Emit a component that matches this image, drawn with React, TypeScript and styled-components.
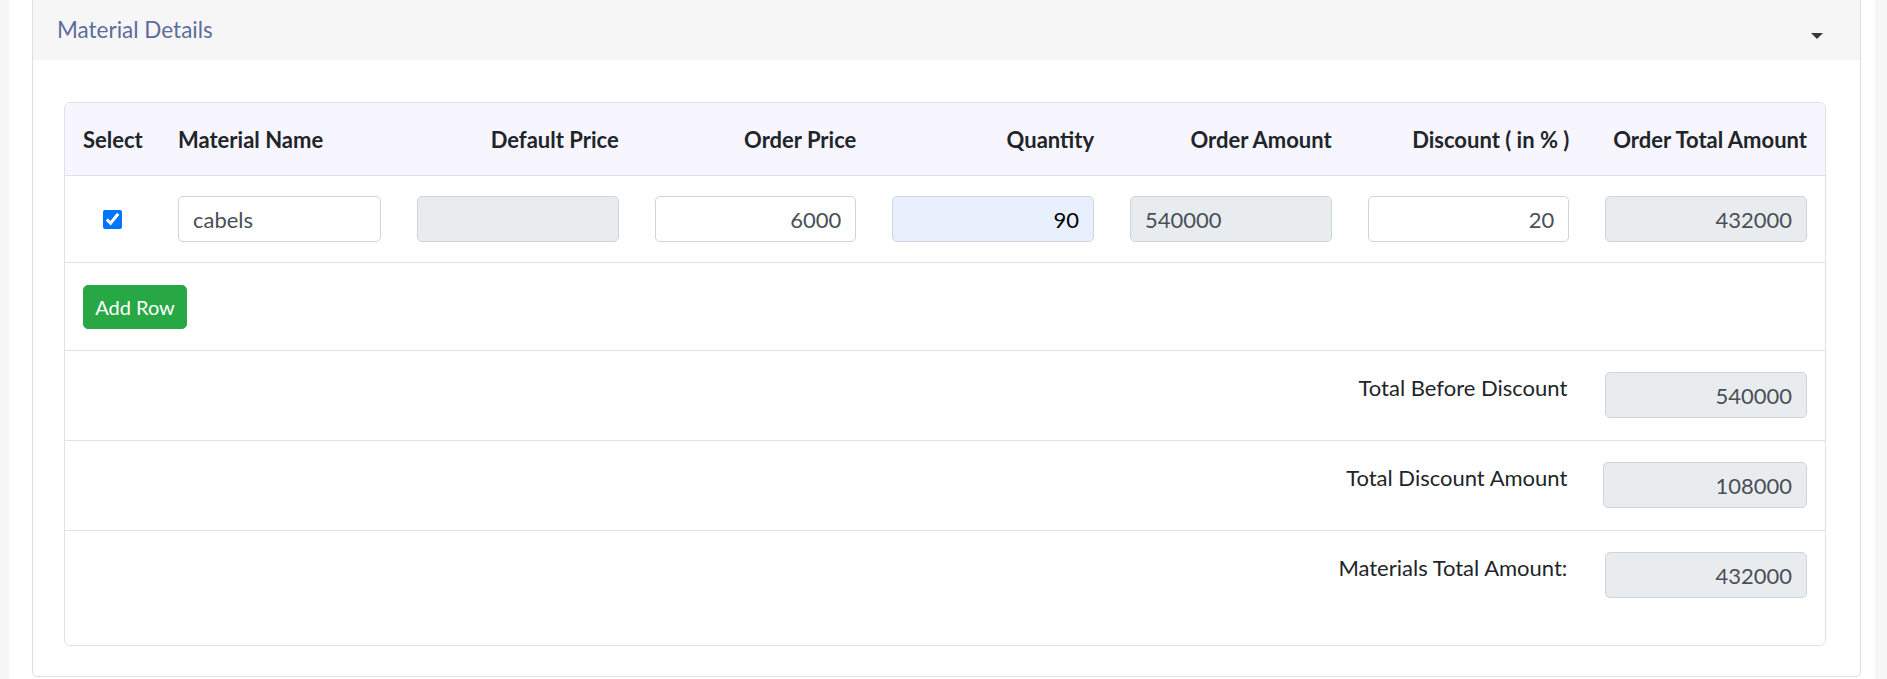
import React from "react";
import styled, { createGlobalStyle, css } from "styled-components";

const GlobalStyle = createGlobalStyle`
  html, body {
    margin: 0;
    padding: 0;
    background: #f7f7f7;
    font-family: Lato, "Open Sans", sans-serif;
    color: #212529;
  }
  * { box-sizing: border-box; }
`;

const Page = styled.div`
  display: flex;
  min-height: 679px;
  padding: 0 12px 0 9px;
`;

const Panel = styled.main`
  flex: 1;
  background: #ffffff;
  padding: 0 14px 2px 23px;
`;

const Card = styled.section`
  border: 1px solid #dfdfdf;
  border-top: 0;
  border-radius: 0 0 5px 5px;
  background: #ffffff;
`;

const CardHeader = styled.header`
  display: flex;
  align-items: center;
  justify-content: space-between;
  height: 60px;
  padding: 0 37px 0 24px;
  background: #f6f6f6;
`;

const CardTitle = styled.h3`
  margin: 0 0 2px;
  font-size: 22.5px;
  font-weight: 400;
  color: #5d6c9d;
`;

const Caret = styled.svg`
  width: 12px;
  height: 6px;
  margin-top: 11px;
  fill: #343a40;
`;

const CardBody = styled.div`
  padding: 42px 34px 30px 31px;
`;

const TableBox = styled.div`
  border: 1px solid #dee2e6;
  border-radius: 6px;
  overflow: hidden;
`;

const gridCols = css`
  display: grid;
  grid-template-columns: 95px 239px repeat(6, 1fr);
`;

const HeadRow = styled.div`
  ${gridCols};
  height: 73px;
  align-items: center;
  background: #f7f6fe;
  border-bottom: 1px solid #dee2e6;
`;

const HeadCell = styled.div<{ $align?: "left" | "right" }>`
  padding: 0 18px;
  font-size: 22px;
  font-weight: 700;
  text-align: ${(p) => p.$align ?? "right"};
  white-space: nowrap;
  color: #212529;
`;

const BodyRow = styled.div`
  ${gridCols};
  height: 87px;
  align-items: center;
  border-bottom: 1px solid #dee2e6;
`;

const Cell = styled.div<{ $center?: boolean }>`
  padding: 0 18px;
  display: flex;
  justify-content: ${(p) => (p.$center ? "center" : "stretch")};
`;

const ActionRow = styled.div`
  display: flex;
  align-items: center;
  height: 88px;
  padding: 0 18px;
  border-bottom: 1px solid #dee2e6;
`;

const SummaryRow = styled.div<{ $last?: boolean }>`
  ${gridCols};
  align-items: start;
  padding: 21px 0 ${(p) => (p.$last ? "47px" : "22px")};
  border-bottom: ${(p) => (p.$last ? "0" : "1px solid #dee2e6")};
`;

const SummaryLabel = styled.label`
  grid-column: 1 / 8;
  padding: 1px 20px 0 18px;
  font-size: 22px;
  line-height: 29px;
  text-align: right;
  color: #212529;
`;

const Check = styled.input`
  width: 19px;
  height: 19px;
  margin: 0;
  accent-color: #0075ff;
`;

const Field = styled.input<{
  $variant?: "plain" | "readonly" | "filled";
  $align?: "left" | "right";
  $extend?: number;
}>`
  width: calc(100% + ${(p) => p.$extend ?? 0}px);
  margin-left: ${(p) => -(p.$extend ?? 0)}px;
  height: 46px;
  padding: 0 14px;
  border: 1px solid #ced4da;
  border-radius: 5px;
  font-family: Lato, "Open Sans", sans-serif;
  font-size: 22px;
  outline: none;
  text-align: ${(p) => p.$align ?? "right"};
  color: ${(p) => (p.$variant === "filled" ? "#000000" : "#495057")};
  background: ${(p) =>
    p.$variant === "readonly"
      ? "#e9ecef"
      : p.$variant === "filled"
      ? "#e8f0fe"
      : "#ffffff"};
`;

const AddButton = styled.button`
  width: 104px;
  height: 44px;
  padding: 0;
  border: 1px solid #28a745;
  border-radius: 5px;
  background: #28a745;
  color: #ffffff;
  font-family: Lato, "Open Sans", sans-serif;
  font-size: 20px;
  cursor: pointer;
`;

const headers: { label: string; align?: "left" | "right" }[] = [
  { label: "Select", align: "left" },
  { label: "Material Name", align: "left" },
  { label: "Default Price" },
  { label: "Order Price" },
  { label: "Quantity" },
  { label: "Order Amount" },
  { label: "Discount ( in % )" },
  { label: "Order Total Amount" },
];

const totals = [
  { label: "Total Before Discount", value: "540000", extend: 0 },
  { label: "Total Discount Amount", value: "108000", extend: 2 },
  { label: "Materials Total Amount:", value: "432000", extend: 0 },
];

export default function App() {
  return (
    <>
      <GlobalStyle />
      <Page>
        <Panel>
          <Card>
            <CardHeader>
              <CardTitle>Material Details</CardTitle>
              <Caret viewBox="0 0 12 6">
                <path d="M0 0h12L6 6z" />
              </Caret>
            </CardHeader>
            <CardBody>
              <TableBox>
                <HeadRow>
                  {headers.map((h) => (
                    <HeadCell key={h.label} $align={h.align}>
                      {h.label}
                    </HeadCell>
                  ))}
                </HeadRow>
                <BodyRow>
                  <Cell $center>
                    <Check type="checkbox" defaultChecked />
                  </Cell>
                  <Cell>
                    <Field $align="left" defaultValue="cabels" />
                  </Cell>
                  <Cell>
                    <Field $variant="readonly" readOnly defaultValue="" />
                  </Cell>
                  <Cell>
                    <Field defaultValue="6000" />
                  </Cell>
                  <Cell>
                    <Field $variant="filled" defaultValue="90" />
                  </Cell>
                  <Cell>
                    <Field
                      $variant="readonly"
                      $align="left"
                      readOnly
                      defaultValue="540000"
                    />
                  </Cell>
                  <Cell>
                    <Field defaultValue="20" />
                  </Cell>
                  <Cell>
                    <Field $variant="readonly" readOnly defaultValue="432000" />
                  </Cell>
                </BodyRow>
                <ActionRow>
                  <AddButton type="button">Add Row</AddButton>
                </ActionRow>
                {totals.map((t, i) => (
                  <SummaryRow key={t.label} $last={i === totals.length - 1}>
                    <SummaryLabel>{t.label}</SummaryLabel>
                    <Cell>
                      <Field
                        $variant="readonly"
                        $extend={t.extend}
                        readOnly
                        defaultValue={t.value}
                      />
                    </Cell>
                  </SummaryRow>
                ))}
              </TableBox>
            </CardBody>
          </Card>
        </Panel>
      </Page>
    </>
  );
}
